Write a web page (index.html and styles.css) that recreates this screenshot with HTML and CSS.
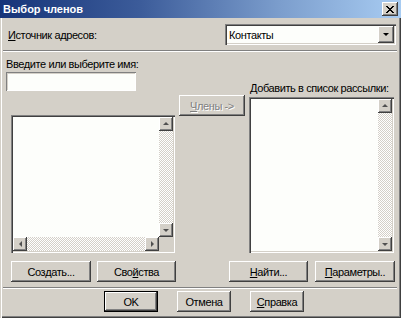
FILE: index.html
```html
<!DOCTYPE html>
<html lang="ru">
<head>
<meta charset="utf-8">
<title>Выбор членов</title>
<link rel="stylesheet" href="styles.css">
</head>
<body>
<div class="dialog">
  <div class="titlebar">
    <span class="title">Выбор членов</span>
    <span class="close">
      <svg width="8" height="7" viewBox="0 0 8 7" shape-rendering="crispEdges">
        <path fill="#000" d="M0 0h2v1H0zM6 0h2v1H6zM1 1h2v1H1zM5 1h2v1H5zM2 2h4v1H2zM3 3h2v1H3zM2 4h4v1H2zM1 5h2v1H1zM5 5h2v1H5zM0 6h2v1H0zM6 6h2v1H6z"/>
      </svg>
    </span>
  </div>

  <div class="source-row">
    <span class="label"><u>И</u>сточник адресов:</span>
    <div class="combo">
      <span class="combo-text">Контакты</span>
      <span class="combo-btn"><i class="arr down"></i></span>
    </div>
  </div>

  <div class="sep sep-top"></div>

  <div class="main">
    <div class="col col-left">
      <div class="label label-name">Вве<u>д</u>ите или выберите имя:</div>
      <div class="input"></div>
      <div class="listbox lb-left">
        <div class="lb-area"></div>
        <div class="vscroll">
          <span class="sbtn"><i class="arr up"></i></span>
          <span class="track"></span>
          <span class="sbtn"><i class="arr down"></i></span>
        </div>
        <div class="hscroll">
          <span class="sbtn"><i class="arr left"></i></span>
          <span class="track"></span>
          <span class="sbtn"><i class="arr right"></i></span>
        </div>
        <div class="corner"></div>
      </div>
    </div>

    <div class="col col-mid">
      <div class="btn btn-members disabled"><span><u>Ч</u>лены -&gt;</span></div>
    </div>

    <div class="col col-right">
      <div class="label label-add">Добавить в список рассылки:</div>
      <div class="listbox lb-right">
        <div class="lb-area"></div>
        <div class="vscroll">
          <span class="sbtn"><i class="arr up"></i></span>
          <span class="track"></span>
          <span class="sbtn"><i class="arr down"></i></span>
        </div>
      </div>
    </div>
  </div>

  <div class="btn-row">
    <div class="btn w80">Соз<u>д</u>ать...</div>
    <div class="btn w79 gap6">Сво<u>й</u>ства</div>
    <div class="btn w79 push"><u>Н</u>айти...</div>
    <div class="btn w80 gap7"><u>П</u>араметры..</div>
  </div>

  <div class="sep sep-bottom"></div>

  <div class="footer">
    <div class="btn default w54">OK</div>
    <div class="btn w54 gap19">Отмена</div>
    <div class="btn w54 gap19"><u>С</u>правка</div>
  </div>
</div>
</body>
</html>
```

FILE: styles.css
```css
* { box-sizing: border-box; }

html, body {
  margin: 0;
  padding: 0;
}

body {
  width: 401px;
  height: 318px;
  overflow: hidden;
  font-family: "Liberation Sans", Arial, sans-serif;
  font-size: 11px;
  line-height: 14px;
  letter-spacing: -0.4px;
  color: #000;
  background: #d4d0c8;
}

u { text-decoration: underline; text-underline-offset: 1px; }

.label { white-space: nowrap; }

.dialog {
  width: 401px;
  height: 318px;
  background: #d4d0c8;
  display: flex;
  flex-direction: column;
  box-shadow: inset 1px 0 0 #d4d0c8, inset 2px 0 0 #fff,
              inset -1px -1px 0 #404040, inset -2px -2px 0 #808080;
}

/* ---------- title bar ---------- */
.titlebar {
  flex: none;
  height: 18px;
  display: flex;
  align-items: center;
  justify-content: space-between;
  padding: 0 3px 0 3px;
  background: linear-gradient(to right, #163479 0%, #3c5c9a 35%, #7c9ecd 70%, #a8ccf2 100%);
}

.title {
  color: #fff;
  font-weight: bold;
  font-size: 11px;
  line-height: 14px;
  letter-spacing: 0;
}

.close {
  width: 16px;
  height: 14px;
  background: #d4d0c8;
  display: flex;
  align-items: center;
  justify-content: center;
  box-shadow: inset -1px -1px 0 #404040, inset 1px 1px 0 #fff,
              inset -2px -2px 0 #808080;
}

.close svg { display: block; }

/* ---------- source row ---------- */
.source-row {
  flex: none;
  height: 21px;
  margin-top: 6px;
  padding: 0 5px 0 8px;
  display: flex;
  align-items: center;
}

.combo {
  margin-left: auto;
  width: 171px;
  height: 21px;
  padding: 2px;
  background: #fdfefb;
  display: flex;
  align-items: center;
  box-shadow: inset 1px 1px 0 #808080, inset 2px 2px 0 #404040,
              inset -1px -1px 0 #fff, inset -2px -2px 0 #d4d0c8;
}

.combo-text {
  flex: 1;
  padding-left: 2px;
}

.combo-btn {
  width: 16px;
  height: 17px;
  background: #d4d0c8;
  display: flex;
  align-items: center;
  justify-content: center;
  box-shadow: inset -1px -1px 0 #404040, inset 1px 1px 0 #fff,
              inset -2px -2px 0 #808080;
}

/* ---------- separators ---------- */
.sep {
  flex: none;
  height: 2px;
  border-top: 1px solid #808080;
  border-bottom: 1px solid #fff;
  margin: 0 4px 0 3px;
}

.sep-top { margin-top: 5px; }
.sep-bottom { margin-top: 5px; }

/* ---------- main area ---------- */
.main {
  flex: none;
  display: flex;
  align-items: flex-start;
}

.col { display: flex; flex-direction: column; }

.col-left {
  margin-left: 6px;
  width: 169px;
}

.label-name { margin-top: 5px; }

.input {
  margin-top: 1px;
  width: 130px;
  height: 19px;
  background: #fdfefb;
  box-shadow: inset 1px 1px 0 #808080, inset -1px -1px 0 #fff,
              inset 2px 2px 0 #d4d0c8;
}

.col-mid {
  margin-left: 4px;
  width: 66px;
}

.btn-members {
  margin-top: 43px;
  height: 22px;
}

.col-right {
  margin-left: 4px;
  width: 145px;
}

.label-add {
  margin-top: 29px;
  padding-left: 1px;
}

/* ---------- list boxes ---------- */
.listbox {
  background: #fdfefb;
  padding: 2px;
  display: grid;
  box-shadow: inset 1px 1px 0 #808080, inset 2px 2px 0 #404040,
              inset -1px -1px 0 #fff, inset -2px -2px 0 #d4d0c8;
}

.lb-left {
  margin-top: 24px;
  margin-left: 5px;
  width: 164px;
  height: 138px;
  grid-template-columns: 1fr 14px;
  grid-template-rows: 1fr 14px;
}

.lb-right {
  margin-top: 2px;
  width: 145px;
  height: 156px;
  grid-template-columns: 1fr 14px;
  grid-template-rows: 1fr;
}

.vscroll {
  display: flex;
  flex-direction: column;
}

.hscroll {
  display: flex;
  flex-direction: row;
}

.track {
  flex: 1;
  background-color: #fff;
  background-image: repeating-conic-gradient(#d4d0c8 0 25%, #fff 0 50%);
  background-size: 2px 2px;
}

.sbtn {
  flex: none;
  width: 14px;
  height: 14px;
  background: #d4d0c8;
  display: flex;
  align-items: center;
  justify-content: center;
  box-shadow: inset -1px -1px 0 #404040, inset 1px 1px 0 #fff,
              inset -2px -2px 0 #808080;
}

.corner { background: #d4d0c8; }

/* arrows */
.arr {
  display: block;
  width: 0;
  height: 0;
}

.arr.up {
  border-left: 3px solid transparent;
  border-right: 3px solid transparent;
  border-bottom: 3px solid #505050;
  width: 1px;
  margin-top: -1px;
}

.arr.down {
  border-left: 3px solid transparent;
  border-right: 3px solid transparent;
  border-top: 3px solid #505050;
  width: 1px;
}

.combo-btn .arr.down { border-top-color: #000; }

.arr.left {
  border-top: 3px solid transparent;
  border-bottom: 3px solid transparent;
  border-right: 3px solid #505050;
  height: 1px;
}

.arr.right {
  border-top: 3px solid transparent;
  border-bottom: 3px solid transparent;
  border-left: 3px solid #505050;
  height: 1px;
}

/* ---------- buttons ---------- */
.btn {
  height: 21px;
  background: #d4d0c8;
  display: flex;
  align-items: center;
  justify-content: center;
  white-space: nowrap;
  box-shadow: inset -1px -1px 0 #404040, inset 1px 1px 0 #fff,
              inset -2px -2px 0 #808080;
}

.btn.disabled { color: #808080; text-shadow: 1px 1px 0 #fff; }

.btn.default {
  box-shadow: inset 0 0 0 1px #000, inset -2px -2px 0 #404040,
              inset 2px 2px 0 #fff, inset -3px -3px 0 #808080;
}

.btn-row {
  flex: none;
  margin-top: 8px;
  padding: 0 6px 0 11px;
  display: flex;
}

.footer {
  flex: none;
  margin-top: 2px;
  padding-left: 104px;
  display: flex;
}

.w80 { width: 80px; }
.w79 { width: 79px; }
.w54 { width: 54px; }
.gap6 { margin-left: 6px; }
.gap7 { margin-left: 7px; }
.gap19 { margin-left: 19px; }
.push { margin-left: auto; }
```
